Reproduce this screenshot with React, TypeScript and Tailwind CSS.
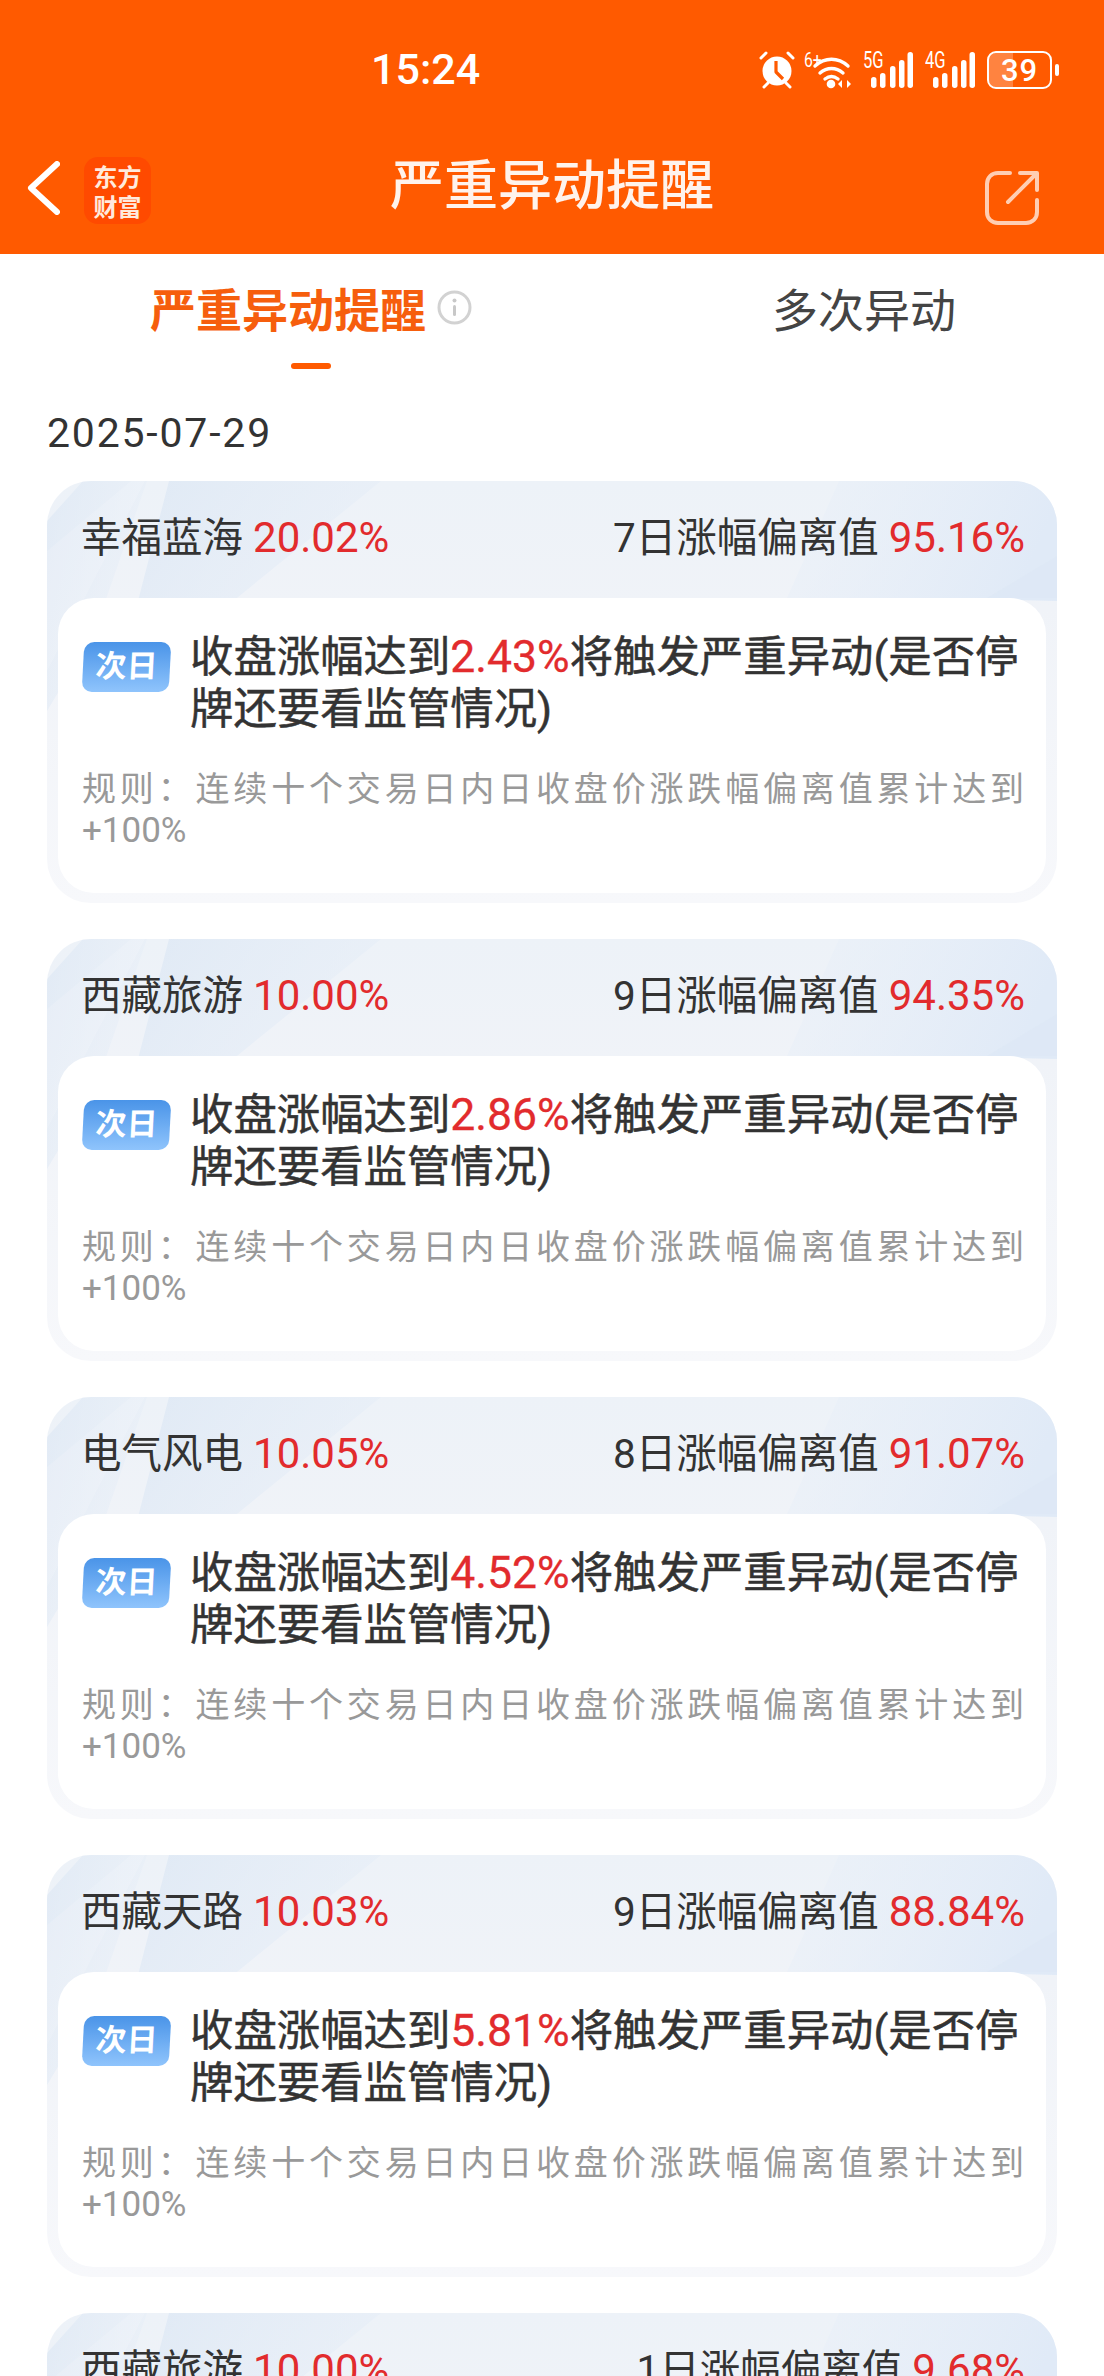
const CJK = "font-['Roboto','Noto_Sans_CJK_SC',sans-serif]";

type Stock = {
  name: string;
  change: string;
  days: string;
  deviation: string;
  trigger: string;
};

const stocks: Stock[] = [
  { name: "幸福蓝海", change: "20.02%", days: "7日", deviation: "95.16%", trigger: "2.43%" },
  { name: "西藏旅游", change: "10.00%", days: "9日", deviation: "94.35%", trigger: "2.86%" },
  { name: "电气风电", change: "10.05%", days: "8日", deviation: "91.07%", trigger: "4.52%" },
  { name: "西藏天路", change: "10.03%", days: "9日", deviation: "88.84%", trigger: "5.81%" },
  { name: "西藏旅游", change: "10.00%", days: "1日", deviation: "9.68%", trigger: "7.20%" },
];

function AlarmIcon() {
  return (
    <svg width="36" height="38" viewBox="0 0 36 38" fill="none">
      <circle cx="18" cy="20" r="14.5" fill="#fff" />
      <path d="M17 10v11l7 7" stroke="#ff5a00" strokeWidth="3.2" strokeLinejoin="round" />
      <path d="M2 7l5-5M34 7l-5-5M5 36l4-4M31 36l-4-4" stroke="#fff" strokeWidth="3" strokeLinecap="round" />
    </svg>
  );
}

function WifiIcon() {
  return (
    <div className="relative h-[38px] w-[50px]">
      <span className="absolute top-0 left-0 origin-top-left scale-x-75 text-[21px] leading-[18px] text-white font-['Roboto',sans-serif]">6+</span>
      <svg className="absolute inset-0" width="50" height="38" viewBox="0 0 50 38" fill="none">
        <path d="M11 15c10-9 23-9 33 0" stroke="#fff" strokeWidth="3.4" strokeLinecap="round" />
        <path d="M16 22c7-6 16-6 23 0" stroke="#fff" strokeWidth="3.4" strokeLinecap="round" />
        <path d="M21 28c4-3 9-3 13 0" stroke="#fff" strokeWidth="3.4" strokeLinecap="round" />
        <circle cx="27" cy="33" r="4.300" fill="#fff" />
        <path d="M38 29l-4 4 4 4zM43 29l4 4-4 4z" fill="#fff" />
      </svg>
    </div>
  );
}

function SignalIcon({ label }: { label: string }) {
  return (
    <div className="relative h-[38px] w-[50px]">
      <span className="absolute top-0 left-0 origin-top-left scale-x-[0.72] text-[23px] leading-[19px] text-white font-['Roboto',sans-serif]">{label}</span>
      <svg className="absolute inset-0" width="50" height="38" viewBox="0 0 50 38" fill="none">
        <rect x="8" y="26" width="5.500" height="11" rx="2.700" fill="#fff" />
        <rect x="17" y="22" width="5.500" height="15" rx="2.700" fill="#fff" />
        <rect x="27" y="15" width="5.500" height="22" rx="2.700" fill="#fff" />
        <rect x="36" y="9" width="5.500" height="28" rx="2.700" fill="#fff" />
        <rect x="44.500" y="1" width="5.500" height="36" rx="2.700" fill="#fff" />
      </svg>
    </div>
  );
}

function Battery() {
  return (
    <div className="flex items-center gap-[3px]">
      <div className="relative flex h-[38px] w-[65px] items-center justify-center overflow-hidden rounded-[9px] border-[2.5px] border-white">
        <div className="absolute inset-y-0 left-0 w-[39%] bg-white/25" />
        <span className="relative text-[31px] leading-none font-medium tracking-[1px] text-white font-['Roboto',sans-serif]">39</span>
      </div>
      <div className="h-[12px] w-[4px] rounded-full bg-white" />
    </div>
  );
}

function StatusBar() {
  return (
    <div className="flex h-[136px] items-start pt-[50px] pr-[45px] pl-[371px]">
      <span className="w-[389px] text-[43px] leading-[38px] font-medium text-white font-['Roboto',sans-serif]">15:24</span>
      <div className="flex items-center gap-[7px] pt-[1px]">
        <AlarmIcon />
        <div className="ml-[2px]"><WifiIcon /></div>
        <div className="ml-[2px]"><SignalIcon label="5G" /></div>
        <div className="ml-[5px]"><SignalIcon label="4G" /></div>
        <div className="ml-[5px]"><Battery /></div>
      </div>
    </div>
  );
}

function NavBar() {
  return (
    <div className="relative flex h-[118px] items-start pl-[27px]">
      <svg className="mt-[25px]" width="33" height="54" viewBox="0 0 33 54" fill="none">
        <path d="M30 3L4 27l26 24" stroke="#fff" strokeWidth="6" strokeLinecap="round" strokeLinejoin="round" />
      </svg>
      <div className="mt-[21px] ml-[24px] flex h-[67px] w-[67px] flex-col items-center justify-center rounded-[14px] bg-[#ff4a00] text-[24px] leading-[30px] font-bold text-[#ffeadd] font-['Noto_Sans_CJK_SC',sans-serif]">
        <span>东方</span>
        <span>财富</span>
      </div>
      <h1 className="absolute inset-x-0 top-[11px] text-center text-[54px] leading-[70px] font-medium text-[#fff3ec] font-['Noto_Sans_CJK_SC',sans-serif]">
        严重异动提醒
      </h1>
      <svg className="absolute top-[34px] right-[64px] opacity-70" width="56" height="56" viewBox="0 0 56 56" fill="none">
        <path d="M26 3H14C7.5 3 3 7.5 3 14v28c0 6.500 4.500 11 11 11h28c6.500 0 11-4.500 11-11V30" stroke="#fff" strokeWidth="4" strokeLinecap="round" />
        <path d="M24 32L52 4M36 3h17v17" stroke="#fff" strokeWidth="4" strokeLinecap="round" strokeLinejoin="round" />
      </svg>
    </div>
  );
}

function Tabs() {
  return (
    <div className="flex h-[116px] pt-[26px]">
      <div className="flex w-[552px] flex-col">
        <div className="flex h-[54px] items-center pl-[150px]">
          <span className="text-[46px] leading-[54px] font-bold text-[#f65e0d] font-['Noto_Sans_CJK_SC',sans-serif]">严重异动提醒</span>
          <svg className="ml-[11px]" width="35" height="35" viewBox="0 0 35 35" fill="none">
            <circle cx="17.500" cy="17.500" r="15.500" stroke="#d2d2d2" strokeWidth="3" />
            <circle cx="17.500" cy="10.500" r="2" fill="#c8c8c8" />
            <rect x="16" y="15" width="3" height="11" rx="1.500" fill="#c8c8c8" />
          </svg>
        </div>
        <div className="mt-[29px] ml-[291px] h-[6px] w-[40px] rounded-full bg-[#ff5a00]" />
      </div>
      <div className="flex h-[54px] w-[552px] items-center pl-[220px]">
        <span className="text-[46px] leading-[54px] text-[#444] font-['Noto_Sans_CJK_SC',sans-serif]">多次异动</span>
      </div>
    </div>
  );
}

// Pale angular facets behind the top of each card.
function CardFacets({ id }: { id: number }) {
  const left = `facet-left-${id}`;
  const right = `facet-right-${id}`;
  return (
    <svg className="absolute top-0 left-0" width="1010" height="300" viewBox="0 0 1010 300" fill="none">
      <defs>
        <linearGradient id={left} x1="0" y1="0" x2="1" y2="0.6">
          <stop offset="0" stopColor="#dce7f4" />
          <stop offset="1" stopColor="#e8eff8" stopOpacity="0.5" />
        </linearGradient>
        <linearGradient id={right} x1="0" y1="0" x2="1" y2="0.2">
          <stop offset="0" stopColor="#e6eef8" stopOpacity="0.2" />
          <stop offset="1" stopColor="#e0eaf7" />
        </linearGradient>
      </defs>
      <path d="M36 0h64L48 150 0 230V40z" fill={`url(#${left})`} opacity="0.7" />
      <path d="M122 0h212L100 190 60 240z" fill={`url(#${left})`} opacity="0.85" />
      <path d="M0 70L84 0h14L0 190z" fill="#fff" opacity="0.15" />
      <path d="M792 0h218v120L880 117H740z" fill={`url(#${right})`} />
      <path d="M1010 75v42h-70z" fill="#dbe6f5" opacity="0.45" />
    </svg>
  );
}

function StockCard({ stock, id }: { stock: Stock; id: number }) {
  return (
    <article className="relative overflow-hidden rounded-[44px] bg-[linear-gradient(180deg,#edf2f8_0%,#f0f3f8_30%,#f7f8fb_100%)] px-[11px] pb-[10px]">
      <CardFacets id={id} />
      <header className="relative flex h-[117px] items-start justify-between pt-[31px] pr-[21px] pl-[23px] text-[40.5px] leading-[52px] text-[#333]">
        <p>
          {stock.name} <span className="text-[42px] text-[#e22b2d]">{stock.change}</span>
        </p>
        <p>
          {stock.days}涨幅偏离值 <span className="text-[42px] text-[#e22b2d]">{stock.deviation}</span>
        </p>
      </header>
      <div className="relative flex h-[295px] flex-col rounded-[36px] bg-white pt-[33px] pr-[18px] pl-[25px]">
        <div className="flex gap-[20px]">
          <div className="mt-[11px] flex h-[50px] w-[87px] shrink-0 -skew-x-3 items-center justify-center rounded-[10px] bg-[linear-gradient(180deg,#4a94e8,#8fc4fc)] text-[31px] font-bold text-white">
            次日
          </div>
          <p className="text-[43.4px] leading-[52px] text-[#333] [-webkit-text-stroke:0.5px_#333]">
            收盘涨幅达到<span className="text-[44.5px] text-[#e22b2d] [-webkit-text-stroke:0.3px_#e22b2d]">{stock.trigger}</span>将触发严重异动(是否停牌还要看监管情况)
          </p>
        </div>
        <p className="mt-[33px] -ml-[1px] mr-[4px] text-justify text-[34px] leading-[41px] text-[#999]">
          规则：连续十个交易日内日收盘价涨跌幅偏离值累计达到<span className="text-[35px]">+100%</span>
        </p>
      </div>
    </article>
  );
}

export default function App() {
  return (
    <div className={`h-[2376px] w-[1104px] overflow-hidden bg-white ${CJK}`}>
      <div className="h-[254px] bg-[#ff5a00]">
        <StatusBar />
        <NavBar />
      </div>
      <Tabs />
      <main className="px-[47px]">
        <p className="pt-[39px] text-[41px] leading-[48px] tracking-[1.800px] text-[#333]">2025-07-29</p>
        <div className="mt-[24px] flex flex-col gap-[36px]">
          {stocks.map((stock, i) => (
            <StockCard key={i} stock={stock} id={i} />
          ))}
        </div>
      </main>
    </div>
  );
}
